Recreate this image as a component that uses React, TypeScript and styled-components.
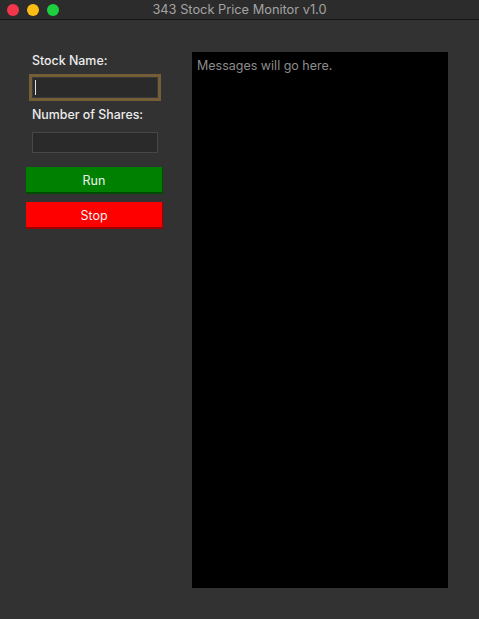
import React from "react";
import styled, { createGlobalStyle } from "styled-components";

const Global = createGlobalStyle`
  html, body { margin: 0; padding: 0; background: #323232; }
  body { font-family: Inter, "Liberation Sans", Arial, sans-serif; }
`;

const Window = styled.div`
  width: 479px;
  height: 619px;
  background: #323232;
  display: flex;
  flex-direction: column;
  overflow: hidden;
`;

const TitleBar = styled.div`
  height: 19px;
  flex: none;
  background: #2c2c2c;
  border-bottom: 1px solid #151515;
  display: flex;
  align-items: center;
  position: relative;
`;

const Lights = styled.div`
  display: flex;
  gap: 8px;
  padding-left: 7px;
`;

const Light = styled.span<{ $c: string }>`
  width: 12px;
  height: 12px;
  border-radius: 50%;
  background: ${(p) => p.$c};
`;

const Title = styled.div`
  position: absolute;
  left: 0;
  right: 0;
  top: 0;
  height: 19px;
  line-height: 19px;
  text-align: center;
  color: #a3a3a3;
  font-family: Inter, "Liberation Sans", sans-serif;
  font-size: 12.8px;
  pointer-events: none;
`;

const Content = styled.div`
  display: flex;
  padding: 32px 0 0 26px;
  gap: 29px;
`;

const Sidebar = styled.div`
  width: 137px;
  display: flex;
  flex-direction: column;
`;

const Label = styled.div<{ $mt: number }>`
  margin: ${(p) => p.$mt}px 0 0 6px;
  font-family: Inter, "Liberation Sans", sans-serif;
  font-weight: 500;
  font-size: 12.4px;
  line-height: 15px;
  color: #ececec;
  white-space: nowrap;
`;

const Input = styled.div<{ $focused?: boolean; $mt: number }>`
  margin: ${(p) => p.$mt}px 0 0 6px;
  width: 126px;
  height: 21px;
  box-sizing: border-box;
  background: #2a2a2a;
  border: 1px solid ${(p) => (p.$focused ? "#3a3a3a" : "#474747")};
  box-shadow: ${(p) => (p.$focused ? "0 0 0 3px #735e38" : "none")};
  position: relative;
`;

const Caret = styled.span`
  position: absolute;
  left: 2px;
  top: 2px;
  width: 1px;
  height: 15px;
  background: #e0e0e0;
`;

const Button = styled.div<{ $bg: string; $edge: string; $mt: number }>`
  margin-top: ${(p) => p.$mt}px;
  height: 27px;
  box-sizing: border-box;
  background: ${(p) => p.$bg};
  border-right: 1px solid ${(p) => p.$edge};
  border-bottom: 2px solid ${(p) => p.$edge};
  display: flex;
  align-items: center;
  justify-content: center;
  color: #f0f0f0;
  font-family: Inter, "Liberation Sans", sans-serif;
  font-size: 12.5px;
  padding-top: 1px;
`;

const Console = styled.div`
  width: 256px;
  height: 536px;
  background: #000;
  box-sizing: border-box;
  padding: 6px 5px;
  color: #8c8c8c;
  font-family: Inter, "Liberation Sans", sans-serif;
  font-size: 12.5px;
  line-height: 16px;
`;

export default function App() {
  return (
    <Window>
      <Global />
      <TitleBar>
        <Lights>
          <Light $c="#f3364b" />
          <Light $c="#fbbd13" />
          <Light $c="#1fd03e" />
        </Lights>
        <Title>343 Stock Price Monitor v1.0</Title>
      </TitleBar>
      <Content>
        <Sidebar>
          <Label $mt={1}>Stock Name:</Label>
          <Input $focused $mt={9}>
            <Caret />
          </Input>
          <Label $mt={9}>Number of Shares:</Label>
          <Input $mt={10} />
          <Button $bg="#008000" $edge="#004b00" $mt={14}>Run</Button>
          <Button $bg="#ff0000" $edge="#a00000" $mt={8}>Stop</Button>
        </Sidebar>
        <Console>Messages will go here.</Console>
      </Content>
    </Window>
  );
}
